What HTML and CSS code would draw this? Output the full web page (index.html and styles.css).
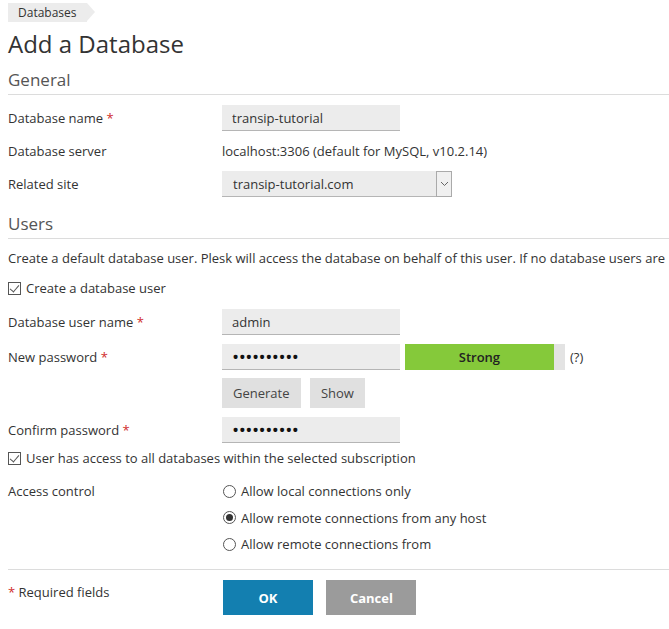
FILE: index.html
```html
<!DOCTYPE html>
<html lang="en">
<head>
    <meta charset="UTF-8">
    <title>Add a Database</title>
    <link rel="stylesheet" href="styles.css">
</head>
<body>
    <div class="page">
        <div class="breadcrumb"><span class="crumb">Databases</span></div>
        <h1 class="title">Add a Database</h1>

        <form class="form">
            <h2 class="section">General</h2>
            <div class="row">
                <label class="label">Database name <span class="req">*</span></label>
                <div class="field"><input class="input" type="text" value="transip-tutorial"></div>
            </div>
            <div class="row row-text">
                <span class="label">Database server</span>
                <div class="field">localhost:3306 (default for MySQL, v10.2.14)</div>
            </div>
            <div class="row">
                <label class="label">Related site</label>
                <div class="field">
                    <div class="select">
                        <span>transip-tutorial.com</span>
                        <span class="select-arrow">
                            <svg width="9" height="6" viewBox="0 0 9 6"><path d="M1 1l3.5 3.5L8 1" fill="none" stroke="#666" stroke-width="1"/></svg>
                        </span>
                    </div>
                </div>
            </div>

            <h2 class="section section-users">Users</h2>
            <p class="hint">Create a default database user. Plesk will access the database on behalf of this user. If no database users are</p>
            <label class="check"><span class="box checked"></span>Create a database user</label>

            <div class="row row-user">
                <label class="label">Database user name <span class="req">*</span></label>
                <div class="field"><input class="input" type="text" value="admin"></div>
            </div>
            <div class="row">
                <label class="label">New password <span class="req">*</span></label>
                <div class="field field-pass">
                    <input class="input pass" type="password" value="1234567890">
                    <div class="strength"><div class="strength-bar" style="width: 93%">Strong</div></div>
                    <span class="help">(?)</span>
                </div>
            </div>
            <div class="row row-buttons">
                <span class="label"></span>
                <div class="field">
                    <button type="button" class="btn">Generate</button>
                    <button type="button" class="btn">Show</button>
                </div>
            </div>
            <div class="row">
                <label class="label">Confirm password <span class="req">*</span></label>
                <div class="field"><input class="input pass" type="password" value="1234567890"></div>
            </div>
            <label class="check check-access"><span class="box checked"></span>User has access to all databases within the selected subscription</label>

            <div class="row row-radios">
                <span class="label">Access control</span>
                <div class="field radios">
                    <label class="radio"><span class="dot"></span>Allow local connections only</label>
                    <label class="radio"><span class="dot on"></span>Allow remote connections from any host</label>
                    <label class="radio"><span class="dot"></span>Allow remote connections from</label>
                </div>
            </div>

            <div class="footer">
                <span class="label"><span class="req">*</span> Required fields</span>
                <div class="field">
                    <button type="button" class="btn-main ok">OK</button>
                    <button type="button" class="btn-main cancel">Cancel</button>
                </div>
            </div>
        </form>
    </div>
</body>
</html>
```

FILE: styles.css
```css
html, body{
    margin: 0;
    padding: 0;
    background: #fff;
}
body{
    font-family: "Open Sans", "Liberation Sans", sans-serif;
    font-size: 13px;
    color: #333;
    overflow: hidden;
}
.page{
    padding: 3px 0 0 8px;
}
.breadcrumb{
    height: 19px;
}
.crumb{
    display: inline-block;
    position: relative;
    height: 19px;
    line-height: 19px;
    padding: 0 10px 0 10px;
    background: #ececec;
    font-size: 12px;
    color: #333;
}
.crumb::after{
    content: "";
    position: absolute;
    right: -8px;
    top: 0;
    border-left: 8px solid #ececec;
    border-top: 9.5px solid transparent;
    border-bottom: 9.5px solid transparent;
}
.title{
    margin: 6px 0 0;
    font-size: 24px;
    font-weight: 400;
    line-height: 32px;
    color: #333;
}
.form{
    margin: 0;
}
.section{
    margin: 8px 0 0;
    padding: 0 0 2px;
    font-size: 17px;
    font-weight: 400;
    line-height: 24px;
    color: #555;
    border-bottom: 1px solid #dcdcdc;
}
.section-users{
    margin-top: 15px;
}
.row{
    display: grid;
    grid-template-columns: 214px 1fr;
    align-items: center;
    min-height: 26px;
    margin-top: 9px;
}
.row-text{
    min-height: 22px;
    margin-top: 9px;
}
.row:first-of-type{
    margin-top: 10px;
}
.row-user{
    margin-top: 11px;
}
.label{
    line-height: 20px;
}
.req{
    color: #d02c2c;
}
.input{
    display: block;
    box-sizing: border-box;
    width: 178px;
    height: 26px;
    margin: 0;
    padding: 0 10px;
    border: 0;
    border-bottom: 1px solid #b5b5b5;
    background: #ececec;
    font-family: inherit;
    font-size: 13px;
    color: #333;
    outline: none;
}
.pass{
    font-size: 19px;
    color: #111;
    letter-spacing: -0.5px;
}
.select{
    display: flex;
    align-items: center;
    justify-content: space-between;
    box-sizing: border-box;
    width: 230px;
    height: 26px;
    padding-left: 11px;
    background: #ececec;
    border-bottom: 1px solid #b5b5b5;
}
.select-arrow{
    display: flex;
    align-items: center;
    justify-content: center;
    box-sizing: border-box;
    width: 16px;
    height: 26px;
    border: 1px solid #aaa;
    background: #f0f0f0;
}
.hint{
    margin: 9px 0 0;
    line-height: 20px;
    white-space: nowrap;
}
.check{
    display: flex;
    align-items: center;
    margin-top: 10px;
    line-height: 20px;
}
.check-access{
    margin-top: 5px;
}
.box{
    position: relative;
    box-sizing: border-box;
    width: 13px;
    height: 13px;
    margin-right: 5px;
    border: 1px solid #555;
    background: #fff;
}
.box.checked::after{
    content: "";
    position: absolute;
    left: 3px;
    top: 0px;
    width: 4px;
    height: 8px;
    border-right: 1.5px solid #555;
    border-bottom: 1.5px solid #555;
    transform: rotate(40deg);
}
.field-pass{
    display: flex;
    align-items: center;
}
.strength{
    width: 160px;
    height: 26px;
    margin-left: 5px;
    background: #e3e3e3;
}
.strength-bar{
    height: 26px;
    line-height: 26px;
    background: #85c93a;
    text-align: center;
    font-weight: 600;
    color: #222;
}
.help{
    margin-left: 5px;
    color: #333;
}
.row-buttons{
    margin-top: 8px;
}
.btn{
    height: 30px;
    margin: 0;
    padding: 0 11px;
    border: 0;
    background: #e0e0e0;
    font-family: inherit;
    font-size: 13px;
    color: #444;
}
.btn + .btn{
    margin-left: 6px;
}
.row-radios{
    align-items: start;
    margin-top: 13px;
}
.radios{
    display: flex;
    flex-direction: column;
    gap: 6.5px;
}
.radio{
    display: flex;
    align-items: center;
    line-height: 20px;
}
.dot{
    position: relative;
    box-sizing: border-box;
    width: 13px;
    height: 13px;
    margin: 0 5px 0 1px;
    border: 1px solid #555;
    border-radius: 50%;
    background: #fff;
}
.dot.on::after{
    content: "";
    position: absolute;
    left: 2px;
    top: 2px;
    width: 7px;
    height: 7px;
    border-radius: 50%;
    background: #333;
}
.footer{
    display: grid;
    grid-template-columns: 215px 1fr;
    margin-top: 15px;
    padding-top: 10px;
    border-top: 1px solid #dcdcdc;
}
.footer .label{
    margin-top: 2px;
}
.btn-main{
    width: 90px;
    height: 35px;
    margin-right: 10px;
    border: 0;
    font-family: inherit;
    font-size: 13px;
    font-weight: 700;
    color: #fff;
}
.ok{
    background: #137fb0;
}
.cancel{
    margin-left: 0;
    background: #9b9b9b;
}
```
